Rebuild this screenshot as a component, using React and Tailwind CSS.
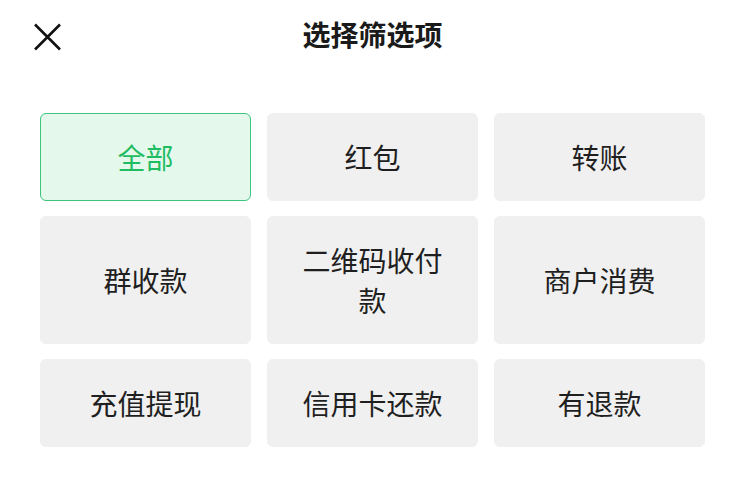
import React, { useState } from "react";

const options = [
  "全部",
  "红包",
  "转账",
  "群收款",
  "二维码收付款",
  "商户消费",
  "充值提现",
  "信用卡还款",
  "有退款",
];

export default function App() {
  const [selected, setSelected] = useState("全部");

  return (
    <div
      className="w-[745px] h-[496px] bg-white text-[#1a1a1a]"
      style={{ fontFamily: '"Noto Sans CJK SC", "Noto Sans", sans-serif' }}
    >
      <div className="relative flex items-center justify-center h-[68px]">
        <button className="absolute left-[33px] top-[23px] w-[29px] h-[28px]">
          <svg viewBox="0 0 29 28" className="w-[29px] h-[28px]">
            <path
              d="M2 1.5 L27 26.5 M27 1.5 L2 26.5"
              stroke="#111"
              strokeWidth="2.6"
              fill="none"
            />
          </svg>
        </button>
        <h1 className="text-[28px] font-bold leading-none">选择筛选项</h1>
      </div>

      <div className="grid grid-cols-3 gap-x-4 gap-y-[15px] px-10 pt-[45px]">
        {options.map((opt) => {
          const active = opt === selected;
          return (
            <button
              key={opt}
              onClick={() => setSelected(opt)}
              className={
                active
                  ? "rounded-md border border-[#3cc57c] bg-[#e5f8ec] text-[#1fbd62] px-7 py-[23px] text-[28px] leading-[40px]"
                  : "rounded-md border border-[#f0f0f0] bg-[#f0f0f0] text-[#1f1f1f] px-7 py-[23px] text-[28px] leading-[40px]"
              }
            >
              {opt}
            </button>
          );
        })}
      </div>
    </div>
  );
}
